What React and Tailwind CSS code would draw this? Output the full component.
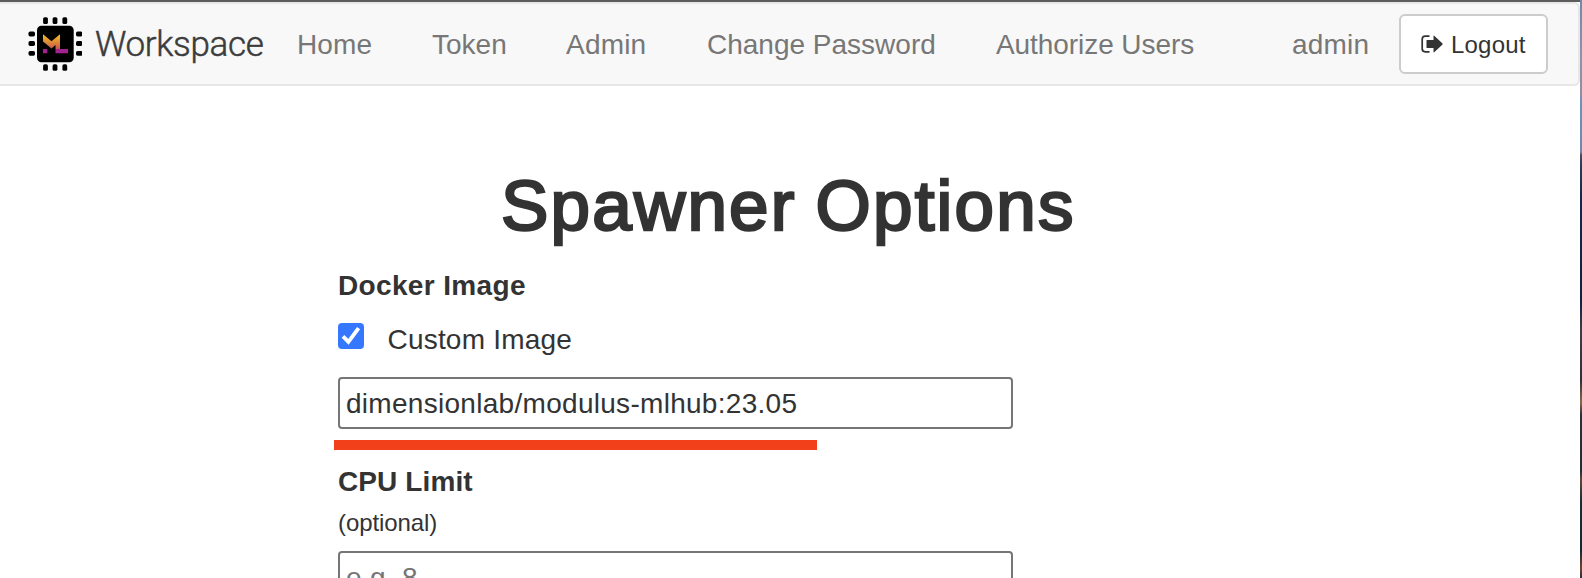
import React from "react";

const NAV_LINKS = [
  { label: "Home", box: "ml-[33px] w-[75px] tracking-[0.100px]" },
  { label: "Token", box: "ml-[60px] w-[74px]" },
  { label: "Admin", box: "ml-[60px] w-[81px] tracking-[0.200px]" },
  { label: "Change Password", box: "ml-[60px] w-[229px]" },
  { label: "Authorize Users", box: "ml-[60px] w-[200px] tracking-[-0.070px]" },
];

function Logo() {
  const pins = [17.5, 27, 36.8];
  return (
    <svg className="h-[54px] w-[54px] shrink-0" viewBox="0 0 54 54">
      <defs>
        <linearGradient id="flame" x1="0" y1="17" x2="0" y2="32" gradientUnits="userSpaceOnUse">
          <stop offset="0" stopColor="#fcc419" />
          <stop offset="1" stopColor="#c4574f" />
        </linearGradient>
      </defs>
      {pins.map((p) => (
        <g key={p} fill="#000">
          <rect x={p - 2.4} y="0.200" width="4.800" height="6.800" rx="1.600" />
          <rect x={p - 2.4} y="47.300" width="4.800" height="6.500" rx="1.600" />
          <rect x="0.500" y={p - 2.9} width="6.500" height="4.800" rx="1.600" />
          <rect x="48" y={p - 2.9} width="6.500" height="4.800" rx="1.600" />
        </g>
      ))}
      <rect x="9" y="8.800" width="36.700" height="36.400" rx="4.500" fill="#000" />
      <path d="M15 17.300 L23.500 24.300 L32 17.300 V32 H27.500 V28 L23.500 31.500 L15 24.500 Z" fill="url(#flame)" />
      <path d="M15 32h4.300v4.200H15z M27.500 32H40v4.200H27.500z" fill="#a3238e" />
    </svg>
  );
}

function LogoutIcon() {
  return (
    <svg className="h-[18px] w-[22px] shrink-0" viewBox="0 0 22 18">
      <path d="M8.500 1.200H4.200Q1.200 1.200 1.200 4.200V13.800Q1.200 16.800 4.200 16.800H8.500" fill="none" stroke="#333" strokeWidth="1.700" />
      <path d="M5.500 5.500Q5.500 5 6 5H12.500V1.300Q12.500 0 13.500 1L21.300 8.300Q22 9 21.300 9.700L13.500 17Q12.500 18 12.500 16.700V13H6Q5.500 13 5.500 12.500Z" fill="#333" />
    </svg>
  );
}

function Navbar() {
  return (
    <nav className="flex h-[84px] w-[1580px] items-center rounded-r-[6px] border-y-2 border-r-2 border-[#e7e7e7] bg-[#f8f8f8] pl-[28px] text-[28px] leading-[40px] text-[#777]">
      <Logo />
      <span className="ml-[13px] w-[169px] whitespace-nowrap pt-[2px] font-[Roboto,sans-serif] text-[35px] font-light tracking-[-0.330px] text-[#3c3c3c] [-webkit-text-stroke:0.500px_#3c3c3c]">
        Workspace
      </span>
      {NAV_LINKS.map(({ label, box }) => (
        <a key={label} className={`${box} shrink-0 whitespace-nowrap pt-[2px]`}>
          {label}
        </a>
      ))}
      <div className="ml-auto mr-[30px] flex items-center">
        <span className="w-[77px] pt-[2px] tracking-[0.200px]">admin</span>
        <button className="ml-[30px] flex h-[60px] w-[149px] items-center rounded-md border-2 border-[#ccc] bg-white pl-5 text-[24px] text-[#333]">
          <LogoutIcon />
          <span className="ml-[8px] pt-[2px] tracking-[0.200px]">Logout</span>
        </button>
      </div>
    </nav>
  );
}

function Checkbox() {
  return (
    <span className="flex h-[26px] w-[26px] shrink-0 items-center justify-center rounded-[4px] bg-[#3578ff]">
      <svg className="h-[26px] w-[26px]" viewBox="0 0 26 26">
        <path d="M5 13.300L10.400 18.800L20.600 5.200" fill="none" stroke="#fff" strokeWidth="3.900" />
      </svg>
    </span>
  );
}

const FIELD = "block h-[52px] w-[675px] rounded-[4px] border-2 border-[#767676] bg-white px-[6px] pt-[2px] text-[28px] tracking-[0.290px] placeholder:text-[#757575]";

export default function App() {
  return (
    <div className="flex h-[578px] w-[1582px] overflow-hidden bg-white font-['Liberation_Sans',Arial,sans-serif] text-[28px] leading-[40px] text-[#333]">
      <div className="w-[1580px] shrink-0">
        <div className="h-[2px] bg-[#5e5c5c]" />
        <Navbar />
        <main className="flex flex-col">
          <h1 className="mt-[80px] h-[81px] whitespace-nowrap pl-[501px] text-[71px] font-normal leading-[80px] tracking-[2.200px] [word-spacing:-3px] [-webkit-text-stroke:2.500px_#333]">
            Spawner Options
          </h1>
          <form className="flex flex-col pl-[338px]">
            <label className="mt-[19px] font-bold tracking-[0.350px]">Docker Image</label>
            <div className="mt-[14px] flex h-[40px]">
              <div className="pt-[3px]"><Checkbox /></div>
              <span className="ml-[23.500px] tracking-[0.200px]">Custom Image</span>
            </div>
            <input className={`${FIELD} mt-[17px]`} defaultValue="dimensionlab/modulus-mlhub:23.05" />
            <div className="-ml-[4px] mt-[11px] h-[10px] w-[483px] bg-[#f2411a]" />
            <label className="mt-[12px] font-bold tracking-[0.100px]">CPU Limit</label>
            <span className="mt-[1px] text-[24px] tracking-[-0.100px]">(optional)</span>
            <input className={`${FIELD} mt-[8px]`} placeholder="e.g. 8" />
          </form>
        </main>
      </div>
      <div className="h-full w-[2px] bg-linear-[180deg,#6f8ba8_0px,#8d93a8_60px,#8c8ea3_96px,#6d93b3_98px,#6b8ba8_152px,#4a4f5d_155px,#253f58_165px,#0d2b4a_200px,#0a2440_300px,#3a3f48_330px,#2c3038_380px,#85694a_402px,#2a3039_415px,#1c3038_470px,#5a4838_480px,#16303a_500px,#0e2b33_550px,#6b4630_568px,#2a3035_578px]" />
    </div>
  );
}
